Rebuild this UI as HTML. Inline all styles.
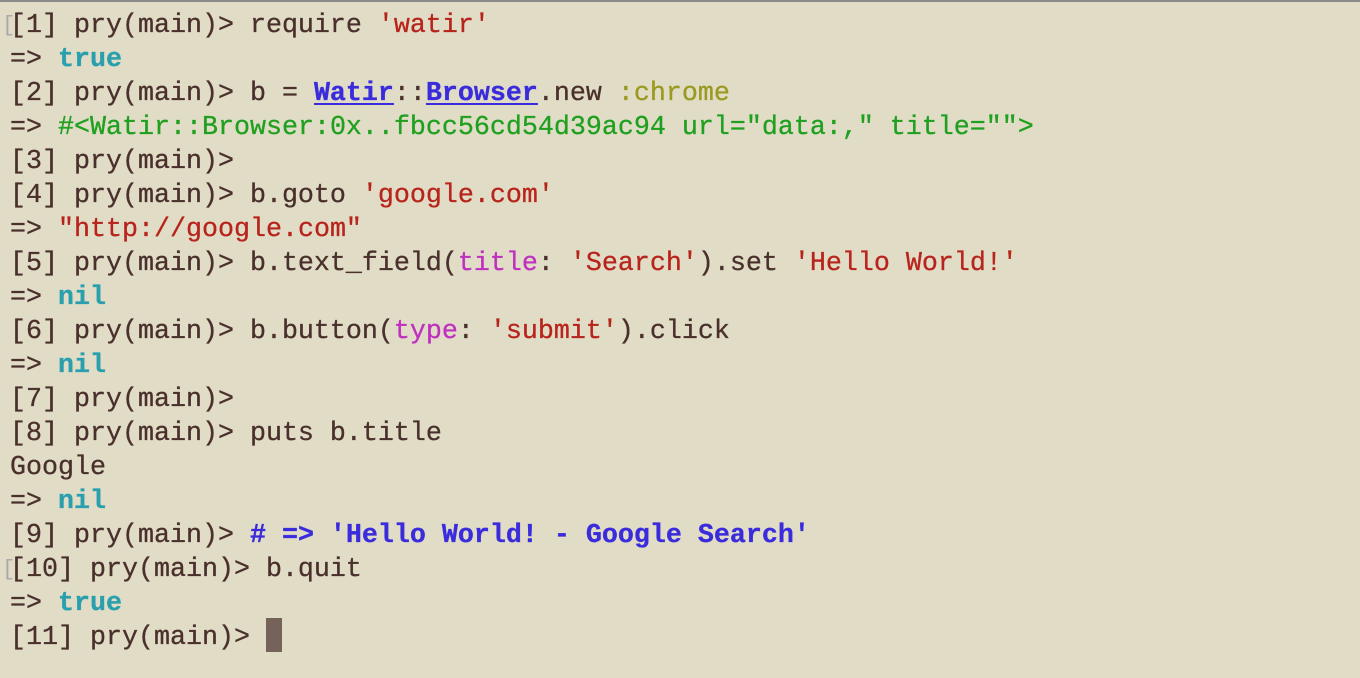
<!DOCTYPE html>
<html><head><meta charset="utf-8"><style>
html,body{margin:0;padding:0}
body{width:1360px;height:678px;background:#e0dcc6;overflow:hidden;position:relative;font-family:"Liberation Mono",monospace;font-size:26.67px;color:#4a302c;-webkit-text-stroke:0.3px}
.top{position:absolute;left:0;top:0;width:1360px;height:2px;background:#8a8a8a}
.l{position:absolute;left:10px;height:34px;line-height:34px;white-space:pre}
.r{color:#b8241c}.c{color:#2a9fae;font-weight:bold}.b{color:#3a2cdc;font-weight:bold}
.u{text-decoration:underline;text-decoration-thickness:2px;text-underline-offset:3px}
.g{color:#20a020}.o{color:#9a9a20}.m{color:#c030c0}
.gb{position:absolute;left:2px;color:#aaa;font-size:22px;-webkit-text-stroke:0}
.cur{position:absolute;left:266px;top:616px;width:16px;height:34px;background:#75635a}
</style></head><body>
<div class="top"></div>
<div class="l" style="top:9px"><span class="gb" style="left:-8px">[</span>[1] pry(main)&gt; require <span class="r">'watir'</span></div>
<div class="l" style="top:43px">=&gt; <span class="c">true</span></div>
<div class="l" style="top:77px">[2] pry(main)&gt; b = <span class="b u">Watir</span>::<span class="b u">Browser</span>.new <span class="o">:chrome</span></div>
<div class="l" style="top:111px">=&gt; <span class="g">#&lt;Watir::Browser:0x..fbcc56cd54d39ac94 url="data:," title=""&gt;</span></div>
<div class="l" style="top:145px">[3] pry(main)&gt;</div>
<div class="l" style="top:179px">[4] pry(main)&gt; b.goto <span class="r">'google.com'</span></div>
<div class="l" style="top:213px">=&gt; <span class="r">"http://google.com"</span></div>
<div class="l" style="top:247px">[5] pry(main)&gt; b.text_field(<span class="m">title</span>: <span class="r">'Search'</span>).set <span class="r">'Hello World!'</span></div>
<div class="l" style="top:281px">=&gt; <span class="c">nil</span></div>
<div class="l" style="top:315px">[6] pry(main)&gt; b.button(<span class="m">type</span>: <span class="r">'submit'</span>).click</div>
<div class="l" style="top:349px">=&gt; <span class="c">nil</span></div>
<div class="l" style="top:383px">[7] pry(main)&gt;</div>
<div class="l" style="top:417px">[8] pry(main)&gt; puts b.title</div>
<div class="l" style="top:451px">Google</div>
<div class="l" style="top:485px">=&gt; <span class="c">nil</span></div>
<div class="l" style="top:519px">[9] pry(main)&gt; <span class="b"># =&gt; 'Hello World! - Google Search'</span></div>
<div class="l" style="top:553px"><span class="gb" style="left:-8px">[</span>[10] pry(main)&gt; b.quit</div>
<div class="l" style="top:587px">=&gt; <span class="c">true</span></div>
<div class="l" style="top:621px">[11] pry(main)&gt; </div>
<div class="cur" style="top:618px"></div>
</body></html>
